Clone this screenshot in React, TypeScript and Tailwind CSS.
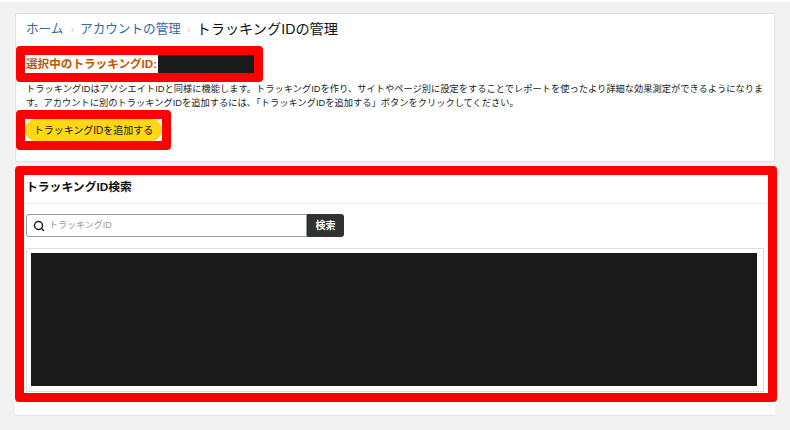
import { Search } from "lucide-react";

const jp = "font-['Liberation_Sans','Noto_Sans_CJK_JP',sans-serif]";

function Breadcrumb() {
  return (
    <div className="ml-[10px] flex h-[32px] items-center pb-[1px] text-[12.6px] leading-none">
      <a className="text-[#2f6a9f]">ホーム</a>
      <span className="ml-[7px] mr-[6px] text-[11px] text-[#ccc]">›</span>
      <a className="text-[#2f6a9f]">アカウントの管理</a>
      <span className="mx-[6px] text-[11px] text-[#ccc]">›</span>
      <span className="text-[14.2px] text-[#111]">トラッキングIDの管理</span>
    </div>
  );
}

function ResultBox() {
  return (
    <div className="mx-[2px] mt-[11px] h-[144px] w-[738px] border border-[#ddd] p-[4px]">
      <div className="h-[133px] w-[726px] bg-[#1a1a1a]" />
    </div>
  );
}

export default function App() {
  return (
    <div className={`${jp} h-[430px] w-[790px] overflow-hidden border-t-2 border-white bg-[#f2f2f2] px-[15px] pt-[11px]`}>
      <section className="h-[149px] w-[760px] rounded-[2px] border border-[#e3e3e3] bg-white">
        <Breadcrumb />
        <div className="flex h-[36px] w-[247px] items-center rounded-[4px] border-[9px] border-[#ff0000] bg-white">
          <span className="ml-[1px] whitespace-nowrap text-[11.6px] font-bold leading-none text-[#c45500]">選択中のトラッキングID:</span>
          <div className="ml-[1px] h-full flex-1 bg-[#1a1a1a]" />
        </div>
        <p className="ml-[10px] w-[745px] text-[9.26px] leading-[14px] text-[#222]">
          トラッキングIDはアソシエイトIDと同様に機能します。トラッキングIDを作り、サイトやページ別に設定をすることでレポートを使ったより詳細な効果測定ができるようになります。アカウントに別のトラッキングIDを追加するには、「トラッキングIDを追加する」ボタンをクリックしてください。
        </p>
        <div className="h-[40px] w-[155px] rounded-[4px] border-[9px] border-[#ff0000] bg-white">
          <button className="flex h-[22px] w-[137px] items-center justify-center rounded-full bg-[#ffd814] text-[10px] text-[#111]">
            トラッキングIDを追加する
          </button>
        </div>
      </section>

      <section className="mt-[4px] h-[250px] w-[760px] rounded-[2px] border-b border-[#e3e3e3] bg-white">
        <div className="h-[236px] w-[762px] rounded-[4px] border-[9px] border-[#ff0000] bg-white">
          <h2 className="flex h-[29px] items-center border-b border-[#eee] pb-[2px] pl-[2px] text-[11.8px] font-bold text-[#111]">
            トラッキングID検索
          </h2>
          <div className="ml-[2px] mt-[10px] flex h-[23px]">
            <div className="flex w-[281px] items-center rounded-l-[3px] border border-[#999] bg-white pl-[6px]">
              <Search size={12} strokeWidth={3} className="text-[#222]" />
              <span className="ml-[4px] text-[9px] text-[#999]">トラッキングID</span>
            </div>
            <button className="w-[37px] rounded-r-[3px] bg-[#303333] text-[10px] font-bold text-white">検索</button>
          </div>
          <ResultBox />
        </div>
      </section>
    </div>
  );
}
